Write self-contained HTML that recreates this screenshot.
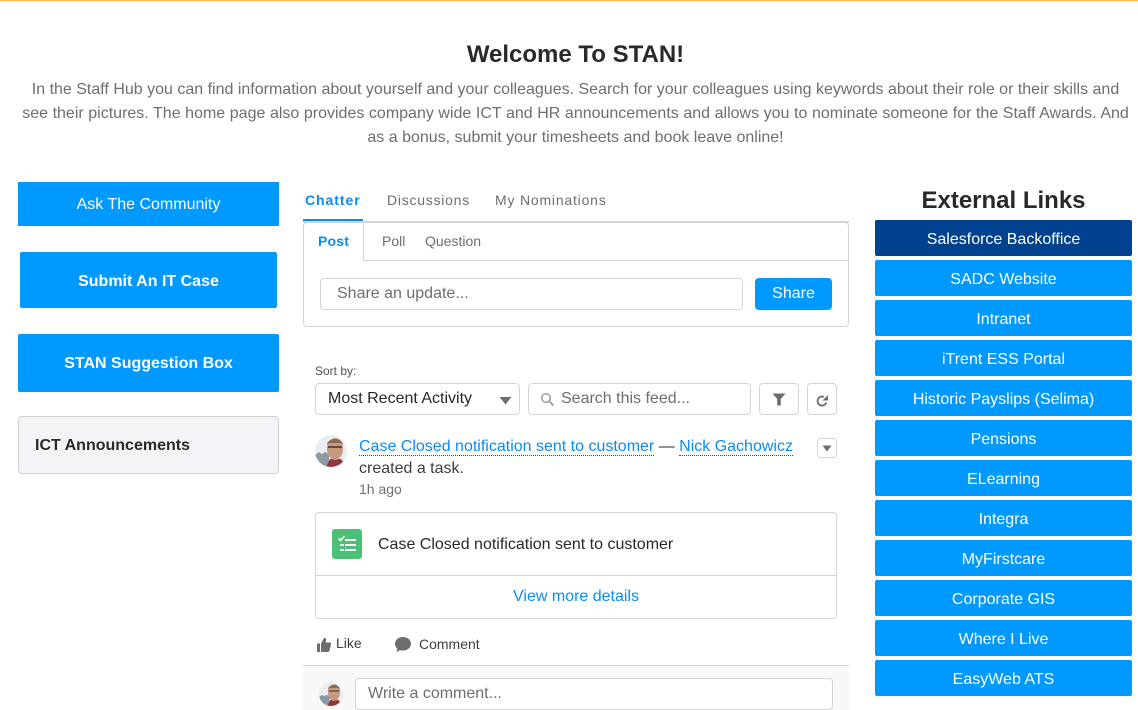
<!DOCTYPE html>
<html><head><meta charset="utf-8"><title>Welcome To STAN!</title>
<style>
html,body{margin:0;padding:0;background:#fff}
body{position:relative;width:1138px;height:710px;overflow:hidden;font-family:"Liberation Sans",Arial,sans-serif;color:#2b2826}
.a{position:absolute;white-space:nowrap}
.c{text-align:center}
.btn{position:absolute;background:#0099ff;color:#fff;text-align:center;white-space:nowrap}
.ext{left:875px;width:257px;height:36px;line-height:40px;font-size:16px;border-radius:2px}
.bd{position:absolute;box-sizing:border-box;border:1px solid #d4d4d4;border-radius:4px;background:#fff}
.link{color:#0a8cf5;border-bottom:1px dotted #444;text-decoration:none}
svg{position:absolute;display:block}
</style></head><body>
<div class="a" style="left:0;top:0;width:1138px;height:1px;background:#fdb44d"></div>
<div class="a c" style="left:0;top:41px;width:1151px;font-size:24px;font-weight:bold;line-height:28px">Welcome To STAN!</div>
<div class="a c" style="left:0;top:78px;width:1151px;font-size:16px;line-height:24px;color:#706e6b">In the Staff Hub you can find information about yourself and your colleagues. Search for your colleagues using keywords about their role or their skills and<br><span style="word-spacing:.13px">see their pictures. The home page also provides company wide ICT and HR announcements and allows you to nominate someone for the Staff Awards. And</span><br>as a bonus, submit your timesheets and book leave online!</div>

<div class="btn" style="left:18px;top:182px;width:261px;height:44px;line-height:45px;font-size:16px">Ask The Community</div>
<div class="btn" style="left:20px;top:252px;width:257px;height:56px;line-height:60px;font-size:16px;font-weight:bold;border-radius:2px">Submit An IT Case</div>
<div class="btn" style="left:18px;top:334px;width:261px;height:58px;line-height:59px;font-size:16px;font-weight:bold;border-radius:2px">STAN Suggestion Box</div>
<div class="bd" style="left:18px;top:416px;width:261px;height:58px;background:#f3f4f8;border-color:#d0d0d0"></div>
<div class="a" style="left:35px;top:436px;font-size:16px;font-weight:bold;line-height:20px">ICT Announcements</div>

<div class="a" style="left:305px;top:191px;font-size:14px;font-weight:bold;letter-spacing:.95px;line-height:18px;color:#0a8cf5">Chatter</div>
<div class="a" style="left:387px;top:191px;font-size:14px;letter-spacing:.75px;line-height:18px;color:#706e6b">Discussions</div>
<div class="a" style="left:495px;top:191px;font-size:14px;letter-spacing:.8px;line-height:18px;color:#706e6b">My Nominations</div>

<div class="bd" style="left:303px;top:222px;width:546px;height:105px"></div>
<div class="a" style="left:303px;top:221px;width:546px;height:2px;background:#d4d4d4"></div>
<div class="a" style="left:303px;top:219px;width:60px;height:2px;background:#0a8cf5"></div>
<div class="a" style="left:363px;top:260px;width:485px;height:1px;background:#d4d4d4"></div>
<div class="a" style="left:363px;top:223px;width:1px;height:38px;background:#d4d4d4"></div>
<div class="a" style="left:318px;top:232px;font-size:14px;font-weight:bold;letter-spacing:.2px;line-height:18px;color:#0a8cf5">Post</div>
<div class="a" style="left:382px;top:232px;font-size:14px;line-height:18px;color:#706e6b">Poll</div>
<div class="a" style="left:425px;top:232px;font-size:14px;line-height:18px;color:#706e6b">Question</div>

<div class="bd" style="left:320px;top:278px;width:423px;height:32px"></div>
<div class="a" style="left:337px;top:284px;font-size:16px;line-height:20px;color:#706e6b">Share an update...</div>
<div class="btn" style="left:755px;top:278px;width:77px;height:32px;line-height:31px;font-size:16px;border-radius:4px">Share</div>

<div class="a" style="left:315px;top:364px;font-size:12px;line-height:15px;color:#54524f">Sort by:</div>
<div class="bd" style="left:315px;top:383px;width:205px;height:32px"></div>
<div class="a" style="left:328px;top:389px;font-size:16px;line-height:20px;color:#2b2826">Most Recent Activity</div>
<svg style="left:499px;top:396px" width="14" height="10" viewBox="0 0 14 10"><path d="M.5 1h12L6.500 8.500z" fill="#706e6b"/></svg>
<div class="bd" style="left:528px;top:383px;width:223px;height:32px"></div>
<svg style="left:540px;top:392px" width="15" height="15" viewBox="0 0 15 15"><circle cx="6" cy="6" r="4.300" fill="none" stroke="#a8a6a3" stroke-width="1.700"/><path d="M9.200 9.200l4.300 4.300" stroke="#a8a6a3" stroke-width="2"/></svg>
<div class="a" style="left:561px;top:389px;font-size:16px;line-height:20px;color:#706e6b">Search this feed...</div>
<div class="bd" style="left:759px;top:383px;width:40px;height:32px"></div>
<svg style="left:771px;top:393px" width="16" height="13" viewBox="0 0 16 13"><path d="M1.500.5h13L9.800 6v6.500h-3.600V6z" fill="#706e6b"/></svg>
<div class="bd" style="left:807px;top:383px;width:30px;height:32px"></div>
<svg style="left:815px;top:393px" width="15" height="14" viewBox="0 0 15 14"><path d="M11.300 9.500A4.500 4.500 0 1 1 9 4" fill="none" stroke="#706e6b" stroke-width="1.800"/><path d="M13 2v5.500H7.500z" fill="#706e6b"/></svg>

<svg style="left:315px;top:435px" width="32" height="32" viewBox="0 0 32 32"><defs><clipPath id="av1"><circle cx="16" cy="16" r="16"/></clipPath></defs><g clip-path="url(#av1)"><rect width="32" height="32" fill="#eaeef2"/><path d="M0 20l4-3 3 2 3-2 4 2v13H0z" fill="#8d9aa3"/><path d="M11 32l4-8h11l6 8z" fill="#8f3a3c"/><ellipse cx="20" cy="14" rx="8" ry="11" fill="#c9987e"/><path d="M12 10c0-7 15-9 16 0l-2-2H14z" fill="#8a6a50"/><path d="M13 12h14" stroke="#3a3230" stroke-width="1.400"/></g></svg>
<div class="a" style="left:359px;top:436px;font-size:16px;line-height:21px"><span class="link">Case Closed notification sent to customer</span> — <span class="link">Nick Gachowicz</span></div>
<div class="a" style="left:359px;top:459px;font-size:16px;line-height:20px;color:#3e3e3c">created a task.</div>
<div class="a" style="left:359px;top:481px;font-size:14px;line-height:17px;color:#706e6b">1h ago</div>
<div class="bd" style="left:817px;top:438px;width:20px;height:20px"></div>
<svg style="left:822px;top:445px" width="11" height="8" viewBox="0 0 11 8"><path d="M.5.500h9L5 6.500z" fill="#706e6b"/></svg>

<div class="bd" style="left:315px;top:512px;width:522px;height:107px"></div>
<div class="a" style="left:316px;top:575px;width:520px;height:1px;background:#d4d4d4"></div>
<svg style="left:332px;top:529px" width="30" height="30" viewBox="0 0 30 30"><rect width="30" height="30" rx="3" fill="#4bc076"/><path d="M6.500 9.500l2 2 4-4.500" fill="none" stroke="#fff" stroke-width="1.600"/><path d="M13 11h11M13 16h11M13 21h11M8 16h4M8 21h4" stroke="#fff" stroke-width="2"/></svg>
<div class="a" style="left:378px;top:535px;font-size:16px;line-height:20px">Case Closed notification sent to customer</div>
<div class="a c" style="left:315px;top:587px;width:522px;font-size:16px;line-height:20px;color:#0a8cf5">View more details</div>

<svg style="left:317px;top:637px" width="14" height="15" viewBox="0 0 14 15"><path d="M0 6.500h3V15H0zM4 6.500L7 1c2-.5 2.500 1 2 2.500L8.700 5.500H13c1 0 1.300 1 1 2l-1.500 6c-.2 1-1 1.500-2 1.500H4z" fill="#706e6b"/></svg>
<div class="a" style="left:336px;top:635px;font-size:14px;line-height:17px;color:#3e3e3c">Like</div>
<svg style="left:395px;top:637px" width="16" height="15" viewBox="0 0 16 15"><path d="M8 0c4.400 0 8 2.900 8 6.800s-3.600 6.800-8 6.800c-1 0-2-.2-2.900-.4L1.500 15l.8-3.300C.8 10.400 0 8.700 0 6.800 0 2.900 3.600 0 8 0z" fill="#706e6b"/></svg>
<div class="a" style="left:419px;top:636px;font-size:14px;line-height:17px;color:#3e3e3c">Comment</div>

<div class="a" style="left:303px;top:665px;width:546px;height:45px;background:#f8f8f8;border-top:1px solid #d4d4d4;box-sizing:border-box"></div>
<svg style="left:319px;top:682px" width="24" height="24" viewBox="0 0 32 32"><defs><clipPath id="av2"><circle cx="16" cy="16" r="16"/></clipPath></defs><g clip-path="url(#av2)"><rect width="32" height="32" fill="#eaeef2"/><path d="M0 20l4-3 3 2 3-2 4 2v13H0z" fill="#8d9aa3"/><path d="M11 32l4-8h11l6 8z" fill="#8f3a3c"/><ellipse cx="20" cy="14" rx="8" ry="11" fill="#c9987e"/><path d="M12 10c0-7 15-9 16 0l-2-2H14z" fill="#8a6a50"/><path d="M13 12h14" stroke="#3a3230" stroke-width="1.400"/></g></svg>
<div class="bd" style="left:355px;top:678px;width:478px;height:32px"></div>
<div class="a" style="left:368px;top:684px;font-size:16px;line-height:20px;color:#706e6b">Write a comment...</div>

<div class="a c" style="left:875px;top:187px;width:257px;font-size:24px;font-weight:bold;line-height:28px">External Links</div>
<div class="btn ext" style="top:220px;background:#00428f">Salesforce Backoffice</div>
<div class="btn ext" style="top:260px">SADC Website</div>
<div class="btn ext" style="top:300px">Intranet</div>
<div class="btn ext" style="top:340px">iTrent ESS Portal</div>
<div class="btn ext" style="top:380px">Historic Payslips (Selima)</div>
<div class="btn ext" style="top:420px">Pensions</div>
<div class="btn ext" style="top:460px">ELearning</div>
<div class="btn ext" style="top:500px">Integra</div>
<div class="btn ext" style="top:540px">MyFirstcare</div>
<div class="btn ext" style="top:580px">Corporate GIS</div>
<div class="btn ext" style="top:620px">Where I Live</div>
<div class="btn ext" style="top:660px">EasyWeb ATS</div>
</body></html>
